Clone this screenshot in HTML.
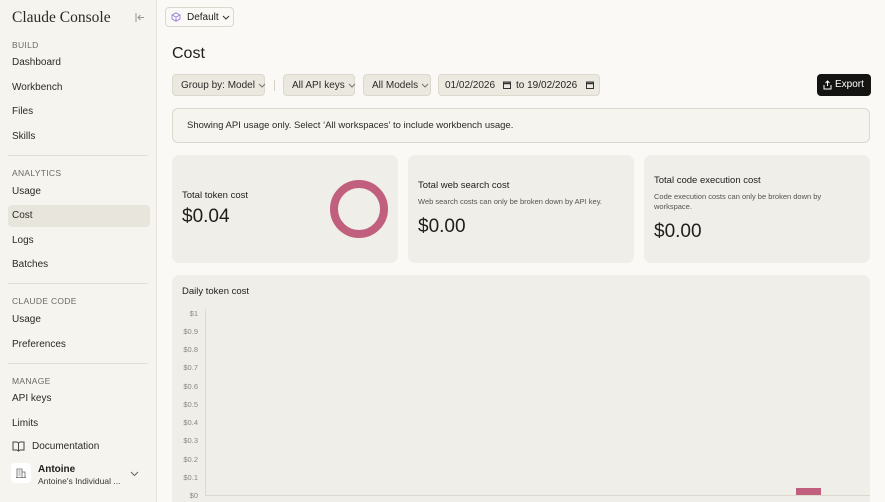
<!DOCTYPE html><html><head><style>
*{box-sizing:border-box;margin:0;padding:0}
html,body{width:885px;height:502px;overflow:hidden}
body{background:#faf9f5;font-family:"Liberation Sans",sans-serif;color:#1f1e1d;position:relative}
.sb{position:absolute;left:0;top:0;width:157px;height:502px;background:#f5f4ef;border-right:1px solid #e6e3da}
.abs{position:absolute;white-space:nowrap}
.logo{left:12px;top:9px;font-family:"Liberation Serif",serif;font-size:15.5px;color:#2b2a27}
.sec{left:12px;font-size:8.5px;color:#6b6963;letter-spacing:.3px}
.it{left:12px;font-size:10px;color:#2b2a27}
.sep{left:8px;width:140px;height:1px;background:#e0ddd4}
.btn{position:absolute;top:74px;height:22px;background:#ebe8e0;border:1px solid #dcd8ce;border-radius:4px;font-size:10px;line-height:21px;padding:0 8px;color:#2b2a27;white-space:nowrap}
.btn svg,.chev{display:inline-block;vertical-align:middle;margin-left:3px}
.card{position:absolute;background:#f0eee8;border-radius:7px}
.yl{position:absolute;left:170px;font-size:7.5px;color:#8a8780;text-align:right;width:28px}
</style></head><body>
<div class="sb">
<div class="abs logo">Claude Console</div>
<svg class="abs" style="left:135px;top:13px" width="10" height="9" viewBox="0 0 10 9"><path d="M1 0v9M9 4.5H3M5.5 2L3 4.5 5.5 7" fill="none" stroke="#9a978f" stroke-width="1"/></svg>
<div class="abs sec" style="top:40px">BUILD</div>
<div class="abs it" style="top:57px">Dashboard</div>
<div class="abs it" style="top:82px">Workbench</div>
<div class="abs it" style="top:106px">Files</div>
<div class="abs it" style="top:131px">Skills</div>
<div class="abs sep" style="top:155px"></div>
<div class="abs sec" style="top:168px">ANALYTICS</div>
<div class="abs it" style="top:186px">Usage</div>
<div class="abs" style="left:8px;top:205px;width:142px;height:22px;background:#e8e5dc;border-radius:4px"></div>
<div class="abs it" style="top:210px">Cost</div>
<div class="abs it" style="top:235px">Logs</div>
<div class="abs it" style="top:259px">Batches</div>
<div class="abs sep" style="top:283px"></div>
<div class="abs sec" style="top:296px">CLAUDE CODE</div>
<div class="abs it" style="top:314px">Usage</div>
<div class="abs it" style="top:339px">Preferences</div>
<div class="abs sep" style="top:363px"></div>
<div class="abs sec" style="top:376px">MANAGE</div>
<div class="abs it" style="top:393px">API keys</div>
<div class="abs it" style="top:418px">Limits</div>
<svg class="abs" style="left:12px;top:441px" width="13" height="11" viewBox="0 0 13 11"><path d="M1 1h4l1.5 1v8L5 9H1zM12 1H8L6.5 2v8L8 9h4z" fill="none" stroke="#444" stroke-width="1"/></svg>
<div class="abs it" style="left:32px;top:441px">Documentation</div>
<div class="abs" style="left:11px;top:463px;width:20px;height:20px;background:#fff;border-radius:4px"></div>
<svg class="abs" style="left:16px;top:468px" width="10" height="10" viewBox="0 0 10 10"><path d="M1 9.5V1h5v8.5M6 4h3v5.5M0 9.5h10M2.5 3h2M2.5 5h2M2.5 7h2" fill="none" stroke="#666" stroke-width="0.8"/></svg>
<div class="abs" style="left:38px;top:464px;font-size:10px;font-weight:bold">Antoine</div>
<div class="abs" style="left:38px;top:476px;font-size:8.5px;color:#3a3935">Antoine's Individual ...</div>
<svg class="abs" style="left:130px;top:471px" width="9" height="6" viewBox="0 0 9 6"><path d="M1 1l3.5 3.5L8 1" fill="none" stroke="#666" stroke-width="1"/></svg>
</div>
<div class="abs" style="left:165px;top:7px;width:69px;height:20px;border:1px solid #dcd8ce;border-radius:4px;background:#faf9f5;font-size:10px;line-height:19px;padding-left:21px">Default<svg class="chev" width="8" height="5" viewBox="0 0 8 5"><path d="M1 1l3 3 3-3" fill="none" stroke="#333" stroke-width="1"/></svg></div>
<svg class="abs" style="left:171px;top:12px" width="10" height="10" viewBox="0 0 10 10"><path d="M5 .8L9 3v4L5 9.2 1 7V3zM1 3l4 2 4-2M5 5v4.2" fill="none" stroke="#9a7be0" stroke-width="0.9"/></svg>
<div class="abs" style="left:172px;top:45px;font-size:16px">Cost</div>
<div class="btn" style="left:172px;width:93px">Group by: Model<svg width="8" height="5" viewBox="0 0 8 5"><path d="M1 1l3 3 3-3" fill="none" stroke="#777" stroke-width="1"/></svg></div>
<div class="abs" style="left:274px;top:80px;width:1px;height:11px;background:#d6d2c8"></div>
<div class="btn" style="left:283px;width:72px">All API keys<svg width="8" height="5" viewBox="0 0 8 5"><path d="M1 1l3 3 3-3" fill="none" stroke="#777" stroke-width="1"/></svg></div>
<div class="btn" style="left:363px;width:68px">All Models<svg width="8" height="5" viewBox="0 0 8 5"><path d="M1 1l3 3 3-3" fill="none" stroke="#777" stroke-width="1"/></svg></div>
<div class="btn" style="left:438px;width:162px;background:#ece9e1;padding-left:6px">01/02/2026</div>
<svg class="abs" style="left:503px;top:81px" width="8" height="8" viewBox="0 0 8 8"><rect x=".5" y="1" width="7" height="6.5" fill="none" stroke="#333"/><path d="M.5 2.5h7" stroke="#333" stroke-width="1.5"/></svg>
<div class="abs" style="left:516px;top:80px;font-size:10px">to 19/02/2026</div>
<svg class="abs" style="left:586px;top:81px" width="8" height="8" viewBox="0 0 8 8"><rect x=".5" y="1" width="7" height="6.5" fill="none" stroke="#333"/><path d="M.5 2.5h7" stroke="#333" stroke-width="1.5"/></svg>
<div class="abs" style="left:817px;top:74px;width:54px;height:22px;background:#141413;border-radius:4px;color:#fff;font-size:10px;line-height:22px;padding-left:18px">Export</div>
<svg class="abs" style="left:823px;top:80px" width="9" height="10" viewBox="0 0 9 10"><path d="M4.5 6V1M2.5 3l2-2 2 2M1 5v4h7V5" fill="none" stroke="#fff" stroke-width="1"/></svg>
<div class="abs" style="left:172px;top:108px;width:698px;height:35px;border:1px solid #dcd8ce;border-radius:6px;background:#f5f4ef;font-size:9.5px;line-height:34px;padding-left:14px;color:#2b2a27">Showing API usage only. Select ‘All workspaces’ to include workbench usage.</div>
<div class="card" style="left:172px;top:155px;width:226px;height:108px">
<div class="abs" style="left:10px;top:35px;font-size:9.5px">Total token cost</div>
<div class="abs" style="left:10px;top:51px;font-size:19px">$0.04</div>
<svg class="abs" style="left:157px;top:24px" width="60" height="60"><circle cx="30" cy="30" r="25" fill="none" stroke="#c0607e" stroke-width="8"/></svg>
</div>
<div class="card" style="left:408px;top:155px;width:226px;height:108px">
<div class="abs" style="left:10px;top:25px;font-size:9.5px">Total web search cost</div>
<div class="abs" style="left:10px;top:42px;font-size:7.5px;color:#55534d">Web search costs can only be broken down by API key.</div>
<div class="abs" style="left:10px;top:61px;font-size:19px">$0.00</div>
</div>
<div class="card" style="left:644px;top:155px;width:226px;height:108px">
<div class="abs" style="left:10px;top:20px;font-size:9.5px">Total code execution cost</div>
<div class="abs" style="left:10px;top:37px;font-size:7.5px;color:#55534d;width:190px;line-height:10px;white-space:normal">Code execution costs can only be broken down by workspace.</div>
<div class="abs" style="left:10px;top:66px;font-size:19px">$0.00</div>
</div>
<div class="card" style="left:172px;top:275px;width:698px;height:240px">
<div class="abs" style="left:10px;top:11px;font-size:9.5px">Daily token cost</div>
</div>
<div class="abs" style="left:205px;top:309px;width:1px;height:187px;background:#ddd9cf"></div>
<div class="abs" style="left:205px;top:495px;width:665px;height:1px;background:#ddd9cf"></div>
<div class="yl" style="top:309px">$1</div>
<div class="yl" style="top:327px">$0.9</div>
<div class="yl" style="top:345px">$0.8</div>
<div class="yl" style="top:363px">$0.7</div>
<div class="yl" style="top:382px">$0.6</div>
<div class="yl" style="top:400px">$0.5</div>
<div class="yl" style="top:418px">$0.4</div>
<div class="yl" style="top:436px">$0.3</div>
<div class="yl" style="top:455px">$0.2</div>
<div class="yl" style="top:473px">$0.1</div>
<div class="yl" style="top:491px">$0</div>
<div class="abs" style="left:796px;top:488px;width:25px;height:7px;background:#c0607e"></div>
</body></html>
